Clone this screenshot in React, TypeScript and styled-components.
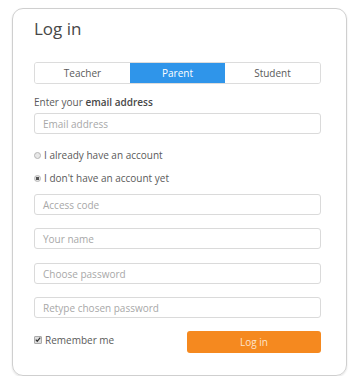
import React from "react";
import styled, { createGlobalStyle } from "styled-components";

const Global = createGlobalStyle`
  html, body { margin: 0; padding: 0; background: #ffffff; }
  body { font-family: "Open Sans", "DejaVu Sans", sans-serif; color: #5a5a5a; }
  * { box-sizing: border-box; }
`;

const Page = styled.div`
  padding: 8px 0 0 12px;
`;

const Card = styled.div`
  width: 335px;
  height: 368px;
  border: 1px solid #cfcfcf;
  border-radius: 11px;
  box-shadow: 0 1px 2px rgba(0, 0, 0, 0.12);
  padding: 10px 25px 0 21px;
  display: flex;
  flex-direction: column;
`;

const Title = styled.h1`
  margin: 0;
  font-size: 17px;
  line-height: 20px;
  font-weight: 400;
  color: #474747;
`;

const Tabs = styled.div`
  margin-top: 23px;
  display: grid;
  grid-template-columns: 1fr 1fr 1fr;
  height: 22px;
  border: 1px solid #dcdcdc;
  border-radius: 3px;
  overflow: hidden;
`;

const Tab = styled.div<{ $active?: boolean }>`
  display: flex;
  align-items: center;
  justify-content: center;
  font-size: 10px;
  color: ${(p) => (p.$active ? "#ffffff" : "#5a5a5a")};
  background: ${(p) => (p.$active ? "#2f95ea" : "#ffffff")};
`;

const Label = styled.div`
  margin-top: 11px;
  font-size: 10px;
  line-height: 14px;
  color: #5a5a5a;
  b { font-weight: 600; color: #474747; }
`;

const Input = styled.div<{ $mt: number }>`
  margin-top: ${(p) => p.$mt}px;
  height: 21px;
  border: 1px solid #dadada;
  border-radius: 3px;
  display: flex;
  align-items: center;
  padding-left: 8px;
  font-size: 10px;
  color: #a8a8a8;
`;

const RadioRow = styled.div<{ $mt: number }>`
  margin-top: ${(p) => p.$mt}px;
  display: flex;
  align-items: center;
  gap: 3px;
  font-size: 10px;
  line-height: 14px;
  color: #5a5a5a;
`;

const RadioDot = styled.span<{ $checked?: boolean }>`
  width: 7px;
  height: 7px;
  border-radius: 50%;
  border: 1px solid #b5b5b5;
  background: ${(p) =>
    p.$checked
      ? "radial-gradient(circle, #555 0 1.6px, #e4e4e4 2px)"
      : "#e8e8e8"};
  flex: none;
`;

const Bottom = styled.div`
  margin-top: 13px;
  display: flex;
  align-items: center;
  justify-content: space-between;
`;

const Remember = styled.label`
  display: flex;
  align-items: center;
  gap: 3px;
  font-size: 10px;
  color: #5a5a5a;
  margin-top: -5px;
`;

const CheckBox = styled.span`
  width: 8px;
  height: 8px;
  border: 1px solid #aaa;
  background: #dedede;
  border-radius: 1px;
  display: flex;
  align-items: center;
  justify-content: center;
  flex: none;
`;

const Button = styled.button`
  width: 134px;
  height: 22px;
  border: none;
  border-radius: 3px;
  background: #f5891f;
  color: #fde4cb;
  font-family: "Open Sans", sans-serif;
  font-size: 10px;
  padding: 0;
`;

export default function App() {
  return (
    <>
      <Global />
      <Page>
        <Card>
          <Title>Log in</Title>
          <Tabs>
            <Tab>Teacher</Tab>
            <Tab $active>Parent</Tab>
            <Tab>Student</Tab>
          </Tabs>
          <Label>
            Enter your <b>email address</b>
          </Label>
          <Input $mt={4}>Email address</Input>
          <RadioRow $mt={14}>
            <RadioDot />I already have an account
          </RadioRow>
          <RadioRow $mt={9}>
            <RadioDot $checked />I don't have an account yet
          </RadioRow>
          <Input $mt={9}>Access code</Input>
          <Input $mt={13}>Your name</Input>
          <Input $mt={14}>Choose password</Input>
          <Input $mt={13}>Retype chosen password</Input>
          <Bottom>
            <Remember>
              <CheckBox>
                <svg width="7" height="7" viewBox="0 0 8 8">
                  <path d="M1 4.2 L3 6.3 L7 1.5" fill="none" stroke="#333" strokeWidth="1.6" />
                </svg>
              </CheckBox>
              Remember me
            </Remember>
            <Button>Log in</Button>
          </Bottom>
        </Card>
      </Page>
    </>
  );
}
